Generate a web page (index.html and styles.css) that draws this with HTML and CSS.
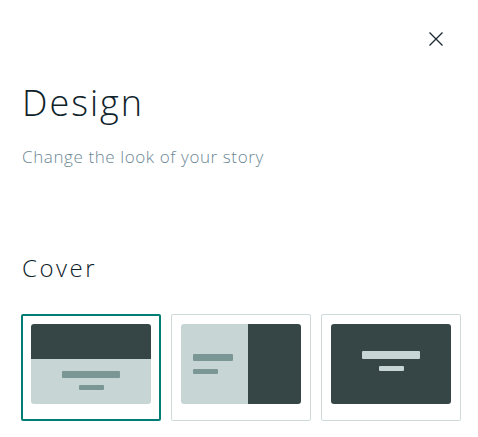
FILE: index.html
```html
<!DOCTYPE html>
<html lang="en">
<head>
    <meta charset="UTF-8">
    <meta name="viewport" content="width=device-width, initial-scale=1.0">
    <title>Design</title>
    <link rel="stylesheet" href="styles.css">
</head>
<body>
    <div class="panel">
        <div class="panel-top">
            <button class="close-btn" aria-label="Close">
                <svg width="14" height="14" viewBox="0 0 14 14">
                    <path d="M0.5 0.5 L13.5 13.5 M13.5 0.5 L0.5 13.5" stroke="#1b2a30" stroke-width="1.3" fill="none"/>
                </svg>
            </button>
        </div>

        <h1 class="title">Design</h1>
        <p class="subtitle">Change the look of your story</p>

        <h2 class="section-title">Cover</h2>

        <div class="cover-options">
            <div class="cover-card selected">
                <div class="preview preview-top">
                    <div class="pv-dark"></div>
                    <div class="pv-light">
                        <span class="bar bar-wide"></span>
                        <span class="bar bar-short"></span>
                    </div>
                </div>
            </div>
            <div class="cover-card">
                <div class="preview preview-side">
                    <div class="pv-light">
                        <span class="bar bar-wide"></span>
                        <span class="bar bar-short"></span>
                    </div>
                    <div class="pv-dark"></div>
                </div>
            </div>
            <div class="cover-card">
                <div class="preview preview-full">
                    <span class="bar bar-wide"></span>
                    <span class="bar bar-short"></span>
                </div>
            </div>
        </div>
    </div>
</body>
</html>
```

FILE: styles.css
```css
:root {
    --ink: #0f232b;
    --muted: #6b8794;
    --teal: #007d74;
    --card-line: #cddad9;
    --pv-dark: #364646;
    --pv-light: #c7d6d5;
    --pv-bar: #7b9795;
}

* {
    margin: 0;
    padding: 0;
    box-sizing: border-box;
}

body {
    background-color: white;
    font-family: 'Open Sans', 'Noto Sans', sans-serif;
    color: var(--ink);
}

.panel {
    padding: 0 17px 0 21px;
}

.panel-top {
    display: flex;
    justify-content: flex-end;
    padding-top: 32px;
}

.close-btn {
    display: block;
    width: 14px;
    height: 14px;
    margin-right: 18px;
    border: none;
    background: none;
    cursor: pointer;
}

.close-btn svg {
    display: block;
}

.title {
    margin-top: 37px;
    padding-left: 1px;
    font-size: 36px;
    line-height: 40px;
    font-weight: 300;
    letter-spacing: 2px;
}

.subtitle {
    margin-top: 23px;
    padding-left: 1px;
    font-size: 17px;
    line-height: 22px;
    font-weight: 300;
    letter-spacing: 0.6px;
    color: var(--muted);
}

.section-title {
    margin-top: 86px;
    padding-left: 1px;
    font-size: 24px;
    line-height: 28px;
    font-weight: 300;
    letter-spacing: 2.5px;
}

.cover-options {
    display: flex;
    gap: 10px;
    margin-top: 32px;
}

.cover-card {
    width: 140px;
    height: 107px;
    padding: 9px 9px 16px;
    border: 1px solid var(--card-line);
    border-radius: 2px;
    cursor: pointer;
}

.cover-card.selected {
    padding: 8px 8px 15px;
    border: 2px solid var(--teal);
}

.preview {
    width: 120px;
    height: 80px;
    border-radius: 3px;
    overflow: hidden;
    display: flex;
}

.preview-top {
    flex-direction: column;
}

.preview-top .pv-dark {
    height: 35px;
    background-color: var(--pv-dark);
}

.preview-top .pv-light {
    flex: 1;
    display: flex;
    flex-direction: column;
    align-items: center;
    gap: 7px;
    padding-top: 12px;
    background-color: var(--pv-light);
}

.preview-side .pv-light {
    width: 67px;
    display: flex;
    flex-direction: column;
    align-items: flex-start;
    gap: 8px;
    padding: 30px 0 0 12px;
    background-color: var(--pv-light);
}

.preview-side .pv-light .bar-wide {
    width: 40px;
}

.preview-side .pv-dark {
    flex: 1;
    background-color: var(--pv-dark);
}

.preview-full {
    flex-direction: column;
    align-items: center;
    gap: 7px;
    padding-top: 27px;
    background-color: var(--pv-dark);
}

.bar {
    display: block;
    border-radius: 1px;
    background-color: var(--pv-bar);
}

.bar-wide {
    width: 58px;
    height: 7px;
}

.bar-short {
    width: 25px;
    height: 5px;
}

.preview-full .bar {
    background-color: var(--pv-light);
}

.preview-full .bar-wide {
    height: 8px;
}
```
